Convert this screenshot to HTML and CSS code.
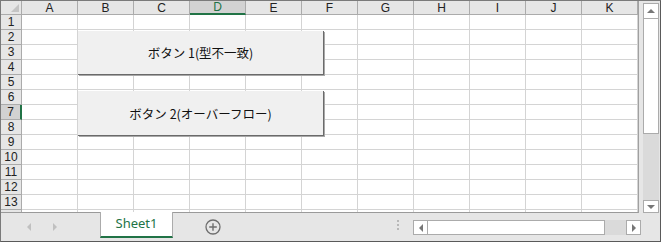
FILE: index.html
```html
<!DOCTYPE html>
<html lang="ja">
<head>
<meta charset="utf-8">
<link rel="stylesheet" href="styles.css">
</head>
<body>
<div class="app">
  <div class="main">
    <div class="sheet">
      <div class="colhead">
        <div class="corner"><span class="tri"></span></div>
        <div class="ch">A</div><div class="ch">B</div><div class="ch">C</div><div class="ch sel">D</div><div class="ch">E</div><div class="ch">F</div><div class="ch">G</div><div class="ch">H</div><div class="ch">I</div><div class="ch">J</div><div class="ch">K</div>
      </div>
      <div class="row"><div class="rh">1</div><div class="c"></div><div class="c"></div><div class="c"></div><div class="c"></div><div class="c"></div><div class="c"></div><div class="c"></div><div class="c"></div><div class="c"></div><div class="c"></div><div class="c"></div></div>
      <div class="row"><div class="rh">2</div><div class="c"></div><div class="c"></div><div class="c"></div><div class="c"></div><div class="c"></div><div class="c"></div><div class="c"></div><div class="c"></div><div class="c"></div><div class="c"></div><div class="c"></div></div>
      <div class="row"><div class="rh">3</div><div class="c"></div><div class="c"></div><div class="c"></div><div class="c"></div><div class="c"></div><div class="c"></div><div class="c"></div><div class="c"></div><div class="c"></div><div class="c"></div><div class="c"></div></div>
      <div class="row"><div class="rh">4</div><div class="c"></div><div class="c"></div><div class="c"></div><div class="c"></div><div class="c"></div><div class="c"></div><div class="c"></div><div class="c"></div><div class="c"></div><div class="c"></div><div class="c"></div></div>
      <div class="row"><div class="rh">5</div><div class="c"></div><div class="c"></div><div class="c"></div><div class="c"></div><div class="c"></div><div class="c"></div><div class="c"></div><div class="c"></div><div class="c"></div><div class="c"></div><div class="c"></div></div>
      <div class="row"><div class="rh">6</div><div class="c"></div><div class="c"></div><div class="c"></div><div class="c"></div><div class="c"></div><div class="c"></div><div class="c"></div><div class="c"></div><div class="c"></div><div class="c"></div><div class="c"></div></div>
      <div class="row"><div class="rh sel">7</div><div class="c"></div><div class="c"></div><div class="c"></div><div class="c"></div><div class="c"></div><div class="c"></div><div class="c"></div><div class="c"></div><div class="c"></div><div class="c"></div><div class="c"></div></div>
      <div class="row"><div class="rh">8</div><div class="c"></div><div class="c"></div><div class="c"></div><div class="c"></div><div class="c"></div><div class="c"></div><div class="c"></div><div class="c"></div><div class="c"></div><div class="c"></div><div class="c"></div></div>
      <div class="row"><div class="rh">9</div><div class="c"></div><div class="c"></div><div class="c"></div><div class="c"></div><div class="c"></div><div class="c"></div><div class="c"></div><div class="c"></div><div class="c"></div><div class="c"></div><div class="c"></div></div>
      <div class="row"><div class="rh">10</div><div class="c"></div><div class="c"></div><div class="c"></div><div class="c"></div><div class="c"></div><div class="c"></div><div class="c"></div><div class="c"></div><div class="c"></div><div class="c"></div><div class="c"></div></div>
      <div class="row"><div class="rh">11</div><div class="c"></div><div class="c"></div><div class="c"></div><div class="c"></div><div class="c"></div><div class="c"></div><div class="c"></div><div class="c"></div><div class="c"></div><div class="c"></div><div class="c"></div></div>
      <div class="row"><div class="rh">12</div><div class="c"></div><div class="c"></div><div class="c"></div><div class="c"></div><div class="c"></div><div class="c"></div><div class="c"></div><div class="c"></div><div class="c"></div><div class="c"></div><div class="c"></div></div>
      <div class="row"><div class="rh">13</div><div class="c"></div><div class="c"></div><div class="c"></div><div class="c"></div><div class="c"></div><div class="c"></div><div class="c"></div><div class="c"></div><div class="c"></div><div class="c"></div><div class="c"></div></div>
      <div class="row"><div class="rh"></div><div class="c"></div><div class="c"></div><div class="c"></div><div class="c"></div><div class="c"></div><div class="c"></div><div class="c"></div><div class="c"></div><div class="c"></div><div class="c"></div><div class="c"></div></div>

      <div class="btn btn1">ボタン 1(型不一致)</div>
      <div class="btn btn2">ボタン 2(オーバーフロー)</div>
    </div>
    <div class="vscroll">
      <div class="sbtn up"><span class="arr-up"></span></div>
      <div class="vthumb"></div>
      <div class="vtrack"></div>
      <div class="sbtn down"><span class="arr-down"></span></div>
    </div>
  </div>
  <div class="tabbar">
    <div class="navs">
      <span class="nav-l"></span>
      <span class="nav-r"></span>
    </div>
    <div class="tab">Sheet1</div>
    <div class="addsheet">
      <svg width="16" height="16" viewBox="0 0 16 16"><circle cx="8" cy="8" r="7" fill="none" stroke="#6e6e6e" stroke-width="1.3"/><path d="M8 4.2v7.6M4.2 8h7.6" stroke="#6e6e6e" stroke-width="1.4"/></svg>
    </div>
    <div class="spacer"></div>
    <div class="dots"><i></i><i></i><i></i></div>
    <div class="hscroll">
      <div class="hbtn"><span class="arr-left"></span></div>
      <div class="hthumb"></div>
      <div class="htrack"></div>
      <div class="hbtn"><span class="arr-right"></span></div>
    </div>
  </div>
</div>
</body>
</html>
```

FILE: styles.css
```css
* { box-sizing: border-box; }
html, body { margin: 0; padding: 0; }
body {
  width: 661px;
  height: 242px;
  overflow: hidden;
  background: #fff;
  font-family: "Liberation Sans", "Noto Sans CJK JP", sans-serif;
}
.app {
  width: 661px;
  height: 242px;
  border: 1px solid #7a7a7a;
  border-right-color: #5a5a5a;
  border-bottom-color: #5a5a5a;
  display: flex;
  flex-direction: column;
  background: #e6e6e6;
}
.main {
  display: flex;
  height: 211px;
}
.sheet {
  position: relative;
  width: 637px;
  height: 211px;
  overflow: hidden;
  background: #fff;
  flex: none;
}
.colhead, .row { display: flex; }
.colhead { height: 14px; }
.row { height: 15px; }
.corner {
  width: 21px;
  height: 14px;
  background: #e6e6e6;
  border-right: 1px solid #ababab;
  border-bottom: 1px solid #ababab;
  position: relative;
}
.tri {
  position: absolute;
  right: 2px;
  bottom: 2px;
  width: 0;
  height: 0;
  border-left: 8px solid transparent;
  border-bottom: 8px solid #c4c4c4;
}
.ch {
  width: 56px;
  height: 14px;
  background: #e6e6e6;
  border-right: 1px solid #ababab;
  border-bottom: 1px solid #ababab;
  font-size: 12px;
  line-height: 14px;
  text-align: center;
  color: #222;
}
.ch.sel {
  background: #d2d2d2;
  border-bottom: 2px solid #217346;
  color: #217346;
  line-height: 13px;
}
.rh {
  width: 21px;
  height: 15px;
  background: #e6e6e6;
  border-right: 1px solid #ababab;
  border-bottom: 1px solid #ababab;
  font-size: 12px;
  line-height: 15px;
  text-align: center;
  color: #222;
}
.rh.sel {
  background: #d2d2d2;
  border-right: 2px solid #217346;
}
.c {
  width: 56px;
  height: 15px;
  border-right: 1px solid #d4d4d4;
  border-bottom: 1px solid #d4d4d4;
}
.btn {
  position: absolute;
  left: 77px;
  width: 246px;
  background: #f0f0f0;
  border-right: 1px solid #6a6a6a;
  border-bottom: 1px solid #6a6a6a;
  box-shadow: 1px 1px 0 #a8a8a8;
  font-family: "Noto Sans CJK JP", sans-serif;
  font-size: 12.5px;
  color: #111;
  display: flex;
  align-items: center;
  justify-content: center;
}
.btn1 { top: 30px; height: 44px; }
.btn2 { top: 90px; height: 45px; }

.vscroll {
  width: 22px;
  height: 212px;
  border-left: 1px solid #a0a0a0;
  padding: 2px 1px 0 4px;
  display: flex;
  flex-direction: column;
  background: #e6e6e6;
  position: relative;
  z-index: 1;
}
.sbtn {
  height: 16px;
  width: 16px;
  background: #fff;
  border: 1px solid #ababab;
  display: flex;
  align-items: center;
  justify-content: center;
  flex: none;
}
.vthumb {
  height: 115px;
  width: 16px;
  background: #fff;
  border: 1px solid #ababab;
  border-top: none;
  flex: none;
}
.vtrack {
  flex: 1;
  width: 16px;
  background: #dadada;
}
.sbtn.down { height: 13px; }
.arr-up {
  width: 0; height: 0;
  border-left: 4px solid transparent;
  border-right: 4px solid transparent;
  border-bottom: 4px solid #777;
}
.arr-down {
  width: 0; height: 0;
  border-left: 4px solid transparent;
  border-right: 4px solid transparent;
  border-top: 4px solid #777;
}

.tabbar {
  height: 29px;
  border-top: 1px solid #9a9a9a;
  display: flex;
  align-items: flex-start;
  background: #e6e6e6;
}
.navs {
  width: 99px;
  height: 28px;
  display: flex;
  align-items: center;
  padding-left: 26px;
  gap: 22px;
}
.nav-l {
  width: 0; height: 0;
  border-top: 4px solid transparent;
  border-bottom: 4px solid transparent;
  border-right: 4px solid #c0c0c0;
}
.nav-r {
  width: 0; height: 0;
  border-top: 4px solid transparent;
  border-bottom: 4px solid transparent;
  border-left: 4px solid #c0c0c0;
}
.tab {
  width: 73px;
  height: 26px;
  margin-top: -1px;
  background: #fff;
  border-left: 1px solid #ababab;
  border-right: 1px solid #ababab;
  border-bottom: 2px solid #217346;
  color: #217346;
  font-family: "Noto Sans", sans-serif;
  font-size: 13px;
  line-height: 23px;
  text-align: center;
}
.addsheet {
  width: 16px;
  height: 16px;
  margin: 6px 0 0 32px;
}
.addsheet svg { display: block; }
.spacer { flex: 1; }
.dots {
  display: flex;
  flex-direction: column;
  gap: 2px;
  margin: 7px 14px 0 0;
}
.dots i {
  display: block;
  width: 2px;
  height: 2px;
  background: #b8b8b8;
}
.hscroll {
  display: flex;
  margin: 7px 19px 0 0;
  height: 15px;
}
.hbtn {
  width: 15px;
  height: 15px;
  background: #fff;
  border: 1px solid #ababab;
  display: flex;
  align-items: center;
  justify-content: center;
}
.hthumb {
  width: 177px;
  height: 15px;
  background: #fff;
  border: 1px solid #ababab;
  border-left: none;
}
.htrack {
  width: 21px;
  height: 15px;
  background: #dadada;
}
.arr-left {
  width: 0; height: 0;
  border-top: 4px solid transparent;
  border-bottom: 4px solid transparent;
  border-right: 4px solid #777;
}
.arr-right {
  width: 0; height: 0;
  border-top: 4px solid transparent;
  border-bottom: 4px solid transparent;
  border-left: 4px solid #777;
}
```
